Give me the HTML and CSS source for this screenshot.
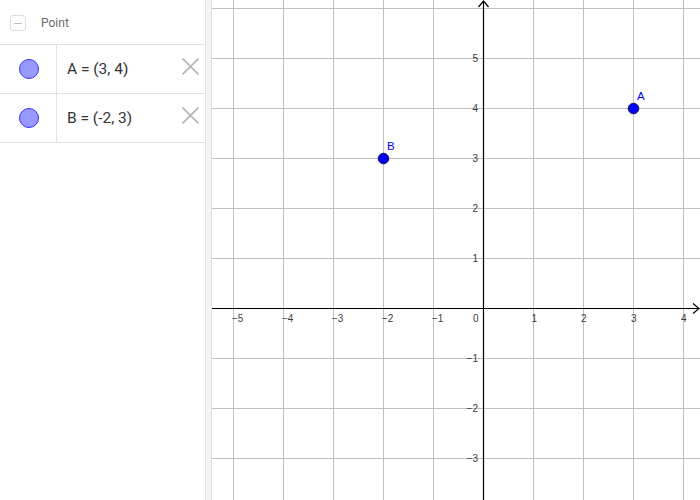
FILE: index.html
```html
<!DOCTYPE html>
<html>
<head>
<meta charset="utf-8">
<link rel="stylesheet" href="styles.css">
</head>
<body>
<div class="app">
  <div class="algebra">
    <div class="group-head">
      <span class="collapse"><span class="dash"></span></span>
      <span class="group-title">Point</span>
    </div>
    <div class="row">
      <div class="marble-cell"><span class="marble"></span></div>
      <div class="formula">A = (3, 4)</div>
      <div class="del">
        <svg width="17" height="17" viewBox="0 0 17 17"><path d="M0.5 0.5 L16.5 16.5 M16.5 0.5 L0.5 16.5" stroke="#b4b4b4" stroke-width="1.6" fill="none"/></svg>
      </div>
    </div>
    <div class="row">
      <div class="marble-cell"><span class="marble"></span></div>
      <div class="formula">B = (-2, 3)</div>
      <div class="del">
        <svg width="17" height="17" viewBox="0 0 17 17"><path d="M0.5 0.5 L16.5 16.5 M16.5 0.5 L0.5 16.5" stroke="#b4b4b4" stroke-width="1.6" fill="none"/></svg>
      </div>
    </div>
  </div>
  <div class="splitter"></div>
  <div class="graphics">
    <svg class="canvas" width="488" height="500" viewBox="0 0 488 500">
      <g stroke="#c0c0c0" stroke-width="1" shape-rendering="crispEdges">
        <line x1="21.5" y1="0" x2="21.5" y2="500"/>
        <line x1="71.5" y1="0" x2="71.5" y2="500"/>
        <line x1="121.5" y1="0" x2="121.5" y2="500"/>
        <line x1="171.5" y1="0" x2="171.5" y2="500"/>
        <line x1="221.5" y1="0" x2="221.5" y2="500"/>
        <line x1="321.5" y1="0" x2="321.5" y2="500"/>
        <line x1="371.5" y1="0" x2="371.5" y2="500"/>
        <line x1="421.5" y1="0" x2="421.5" y2="500"/>
        <line x1="471.5" y1="0" x2="471.5" y2="500"/>
        <line x1="0" y1="8.5" x2="488" y2="8.5"/>
        <line x1="0" y1="58.5" x2="488" y2="58.5"/>
        <line x1="0" y1="108.5" x2="488" y2="108.5"/>
        <line x1="0" y1="158.5" x2="488" y2="158.5"/>
        <line x1="0" y1="208.5" x2="488" y2="208.5"/>
        <line x1="0" y1="258.5" x2="488" y2="258.5"/>
        <line x1="0" y1="358.5" x2="488" y2="358.5"/>
        <line x1="0" y1="408.5" x2="488" y2="408.5"/>
        <line x1="0" y1="458.5" x2="488" y2="458.5"/>
      </g>
      <g stroke="#000" stroke-width="1.2" fill="none">
        <line x1="0" y1="308.5" x2="487" y2="308.5"/>
        <polyline points="481,303.5 487,308.5 481,313.5"/>
        <line x1="271.5" y1="1" x2="271.5" y2="500"/>
        <polyline points="266.5,7 271.5,1 276.5,7"/>
      </g>
      <g class="ticklabel">
        <text x="20" y="322">−5</text>
        <text x="70" y="322">−4</text>
        <text x="120" y="322">−3</text>
        <text x="170" y="322">−2</text>
        <text x="220" y="322">−1</text>
        <text x="261" y="322">0</text>
        <text x="319.5" y="322">1</text>
        <text x="369" y="322">2</text>
        <text x="419" y="322">3</text>
        <text x="469" y="322">4</text>
      </g>
      <g class="ticklabel ylab">
        <text x="266" y="62">5</text>
        <text x="266" y="112">4</text>
        <text x="266" y="162">3</text>
        <text x="266" y="212">2</text>
        <text x="266" y="262">1</text>
        <text x="266" y="362">−1</text>
        <text x="266" y="412">−2</text>
        <text x="266" y="462">−3</text>
      </g>
      <circle cx="421.5" cy="108.5" r="5.3" fill="#0000ff" stroke="#1a1a40" stroke-width="1"/>
      <circle cx="171.5" cy="158.5" r="5.3" fill="#0000ff" stroke="#1a1a40" stroke-width="1"/>
      <text class="ptlabel" x="425" y="99.5">A</text>
      <text class="ptlabel" x="175" y="149.5">B</text>
    </svg>
  </div>
</div>
</body>
</html>
```
FILE: styles.css
```css
html, body {
  margin: 0;
  padding: 0;
  background: #fff;
  overflow: hidden;
}
.app {
  display: flex;
  width: 700px;
  height: 500px;
  font-family: Roboto, "Liberation Sans", sans-serif;
}
.algebra {
  width: 205px;
  flex: none;
  background: #fff;
}
.group-head {
  height: 45px;
  box-sizing: border-box;
  border-bottom: 1px solid #e2e2e2;
  display: flex;
  align-items: center;
  padding-left: 10px;
  padding-top: 2px;
}
.collapse {
  width: 14px;
  height: 14px;
  border: 1px solid #dcdcdc;
  border-radius: 3px;
  display: flex;
  align-items: center;
  justify-content: center;
  margin-right: 15px;
}
.dash {
  width: 8px;
  height: 1px;
  background: #bdbdbd;
}
.group-title {
  font-size: 12px;
  color: #6b6b6b;
}
.row {
  height: 49px;
  box-sizing: border-box;
  border-bottom: 1px solid #e2e2e2;
  display: flex;
  align-items: stretch;
}
.marble-cell {
  width: 57px;
  box-sizing: border-box;
  border-right: 1px solid #e2e2e2;
  display: flex;
  align-items: center;
  justify-content: center;
  padding-left: 1px;
}
.marble {
  width: 18px;
  height: 18px;
  border-radius: 50%;
  background: #9999ff;
  border: 1px solid #3333ff;
}
.formula {
  flex: 1;
  display: flex;
  align-items: center;
  padding-left: 10px;
  font-size: 15.5px;
  color: #333;
}
.del {
  width: 23px;
  display: flex;
  align-items: center;
  justify-content: flex-start;
  padding-bottom: 6px;
}
.splitter {
  width: 7px;
  flex: none;
  box-sizing: border-box;
  background: #f4f4f4;
  border-left: 1px solid #e0e0e0;
  border-right: 1px solid #dcdcdc;
}
.graphics {
  flex: 1;
  position: relative;
  background: #fff;
}
.canvas {
  display: block;
}
.ticklabel text {
  font-family: "Liberation Sans", sans-serif;
  font-size: 10px;
  fill: #3a3a3a;
}
.ylab text {
  text-anchor: end;
}
.ptlabel {
  font-family: "Liberation Sans", sans-serif;
  font-size: 11.5px;
  fill: #0000ff;
}
```
